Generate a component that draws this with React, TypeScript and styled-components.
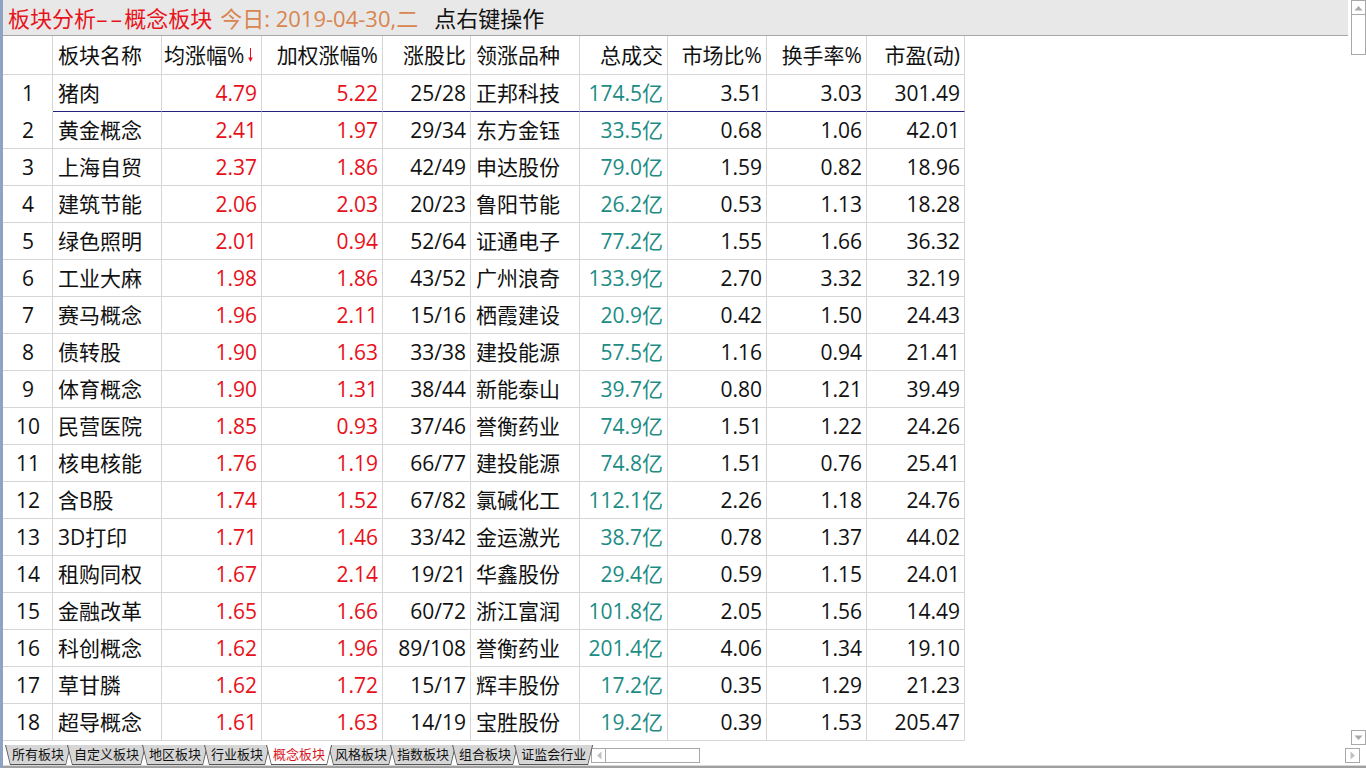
import React from 'react'
import styled, { createGlobalStyle } from 'styled-components'

const GlobalStyle = createGlobalStyle`
  html, body {
    margin: 0;
    padding: 0;
    background: #fff;
  }
  body {
    font-family: "Open Sans", "Noto Sans CJK SC", sans-serif;
  }
`

interface RowData {
  name: string
  avg: string
  weighted: string
  ratio: string
  leader: string
  volume: string
  market: string
  turnover: string
  pe: string
}

const rows: RowData[] = [
  { name: '猪肉', avg: '4.79', weighted: '5.22', ratio: '25/28', leader: '正邦科技', volume: '174.5亿', market: '3.51', turnover: '3.03', pe: '301.49' },
  { name: '黄金概念', avg: '2.41', weighted: '1.97', ratio: '29/34', leader: '东方金钰', volume: '33.5亿', market: '0.68', turnover: '1.06', pe: '42.01' },
  { name: '上海自贸', avg: '2.37', weighted: '1.86', ratio: '42/49', leader: '申达股份', volume: '79.0亿', market: '1.59', turnover: '0.82', pe: '18.96' },
  { name: '建筑节能', avg: '2.06', weighted: '2.03', ratio: '20/23', leader: '鲁阳节能', volume: '26.2亿', market: '0.53', turnover: '1.13', pe: '18.28' },
  { name: '绿色照明', avg: '2.01', weighted: '0.94', ratio: '52/64', leader: '证通电子', volume: '77.2亿', market: '1.55', turnover: '1.66', pe: '36.32' },
  { name: '工业大麻', avg: '1.98', weighted: '1.86', ratio: '43/52', leader: '广州浪奇', volume: '133.9亿', market: '2.70', turnover: '3.32', pe: '32.19' },
  { name: '赛马概念', avg: '1.96', weighted: '2.11', ratio: '15/16', leader: '栖霞建设', volume: '20.9亿', market: '0.42', turnover: '1.50', pe: '24.43' },
  { name: '债转股', avg: '1.90', weighted: '1.63', ratio: '33/38', leader: '建投能源', volume: '57.5亿', market: '1.16', turnover: '0.94', pe: '21.41' },
  { name: '体育概念', avg: '1.90', weighted: '1.31', ratio: '38/44', leader: '新能泰山', volume: '39.7亿', market: '0.80', turnover: '1.21', pe: '39.49' },
  { name: '民营医院', avg: '1.85', weighted: '0.93', ratio: '37/46', leader: '誉衡药业', volume: '74.9亿', market: '1.51', turnover: '1.22', pe: '24.26' },
  { name: '核电核能', avg: '1.76', weighted: '1.19', ratio: '66/77', leader: '建投能源', volume: '74.8亿', market: '1.51', turnover: '0.76', pe: '25.41' },
  { name: '含B股', avg: '1.74', weighted: '1.52', ratio: '67/82', leader: '氯碱化工', volume: '112.1亿', market: '2.26', turnover: '1.18', pe: '24.76' },
  { name: '3D打印', avg: '1.71', weighted: '1.46', ratio: '33/42', leader: '金运激光', volume: '38.7亿', market: '0.78', turnover: '1.37', pe: '44.02' },
  { name: '租购同权', avg: '1.67', weighted: '2.14', ratio: '19/21', leader: '华鑫股份', volume: '29.4亿', market: '0.59', turnover: '1.15', pe: '24.01' },
  { name: '金融改革', avg: '1.65', weighted: '1.66', ratio: '60/72', leader: '浙江富润', volume: '101.8亿', market: '2.05', turnover: '1.56', pe: '14.49' },
  { name: '科创概念', avg: '1.62', weighted: '1.96', ratio: '89/108', leader: '誉衡药业', volume: '201.4亿', market: '4.06', turnover: '1.34', pe: '19.10' },
  { name: '草甘膦', avg: '1.62', weighted: '1.72', ratio: '15/17', leader: '辉丰股份', volume: '17.2亿', market: '0.35', turnover: '1.29', pe: '21.23' },
  { name: '超导概念', avg: '1.61', weighted: '1.63', ratio: '14/19', leader: '宝胜股份', volume: '19.2亿', market: '0.39', turnover: '1.53', pe: '205.47' },
]

const tabs = ['所有板块', '自定义板块', '地区板块', '行业板块', '概念板块', '风格板块', '指数板块', '组合板块', '证监会行业']

const App = () => {
  return (
    <>
      <GlobalStyle />
      <Window>
        <Main>
          <Content>
            <TitleBar>
              <TitleRed>
                板块分析<Dashes>--</Dashes>概念板块
              </TitleRed>
              <TitleDate>今日: 2019-04-30,二</TitleDate>
              <TitleHint>点右键操作</TitleHint>
            </TitleBar>
            <Grid>
              <HeadRow>
                <Cell align="center" />
                <Cell align="left">板块名称</Cell>
                <Cell align="left" tight>
                  均涨幅%
                  <SortArrow width="7" height="16" viewBox="0 0 7 16">
                    <path d="M3.5 1 V13" stroke="#e8101a" strokeWidth="1" />
                    <path d="M1.2 10.5 L3.5 15 L5.8 10.5 Z" fill="#e8101a" />
                  </SortArrow>
                </Cell>
                <Cell>加权涨幅%</Cell>
                <Cell>涨股比</Cell>
                <Cell align="left">领涨品种</Cell>
                <Cell>总成交</Cell>
                <Cell>市场比%</Cell>
                <Cell>换手率%</Cell>
                <Cell>市盈(动)</Cell>
              </HeadRow>
              {rows.map((r, i) => {
                const sel = i === 0
                return (
                  <DataRow key={i}>
                    <Cell align="center" noBottom={sel}>{i + 1}</Cell>
                    <Cell align="left" selected={sel}>{r.name}</Cell>
                    <Cell selected={sel} tone="red">{r.avg}</Cell>
                    <Cell selected={sel} tone="red">{r.weighted}</Cell>
                    <Cell selected={sel}>{r.ratio}</Cell>
                    <Cell align="left" selected={sel}>{r.leader}</Cell>
                    <Cell selected={sel} tone="teal">{r.volume}</Cell>
                    <Cell selected={sel}>{r.market}</Cell>
                    <Cell selected={sel}>{r.turnover}</Cell>
                    <Cell selected={sel}>{r.pe}</Cell>
                  </DataRow>
                )
              })}
            </Grid>
          </Content>
          <VScroll>
            <ScrollBtn>
              <svg width="9" height="6" viewBox="0 0 9 6"><path d="M0.5 5.5 L4.5 1 L8.5 5.5 Z" fill="#a8a8a8" /></svg>
            </ScrollBtn>
            <VThumb />
            <VTrack />
            <ScrollBtn>
              <svg width="9" height="6" viewBox="0 0 9 6"><path d="M0.5 0.5 L4.5 5 L8.5 0.5 Z" fill="#a8a8a8" /></svg>
            </ScrollBtn>
          </VScroll>
        </Main>
        <TabBar>
          <Tabs>
            {tabs.map((t) => (
              <Tab key={t} active={t === '概念板块'}>
                <TabFace active={t === '概念板块'}>{t}</TabFace>
              </Tab>
            ))}
          </Tabs>
          <HScroll>
            <ScrollBtn>
              <svg width="6" height="9" viewBox="0 0 6 9"><path d="M5.5 0.5 L1 4.5 L5.5 8.5 Z" fill="#c0c0c0" /></svg>
            </ScrollBtn>
            <HThumb />
            <HTrack />
            <ScrollBtn>
              <svg width="6" height="9" viewBox="0 0 6 9"><path d="M0.5 0.5 L5 4.5 L0.5 8.5 Z" fill="#c0c0c0" /></svg>
            </ScrollBtn>
          </HScroll>
        </TabBar>
        <BottomStrip />
      </Window>
    </>
  )
}

const Window = styled.div`
  width: 1366px;
  height: 768px;
  box-sizing: border-box;
  border-left: 3px solid #8ea2c2;
  display: flex;
  flex-direction: column;
  overflow: hidden;
  background: #fff;
`

const Main = styled.div`
  display: flex;
  height: 745px;
`

const Content = styled.div`
  width: 1347px;
  display: flex;
  flex-direction: column;
`

const TitleBar = styled.div`
  height: 35px;
  border-bottom: 1px solid #a6a6a6;
  background: #e8e8e8;
  display: flex;
  align-items: center;
  gap: 8px;
  padding-left: 5px;
  font-size: 22px;
  line-height: 1;
  white-space: nowrap;
`

const TitleRed = styled.span`
  color: #e8141c;
`

const Dashes = styled.span`
  display: inline-block;
  letter-spacing: 1px;
  margin: 0 4px 0 4px;
  transform: scaleX(1.8);
  padding: 0 2px;
`

const TitleDate = styled.span`
  color: #d8854f;
`

const TitleHint = styled.span`
  color: #111;
  margin-left: 8px;
`

const Grid = styled.div`
  display: flex;
  flex-direction: column;
`

const columns = '50px 109px 100px 121px 88px 109px 88px 99px 100px 98px'

const HeadRow = styled.div`
  display: grid;
  grid-template-columns: ${columns};
  height: 39px;
`

const DataRow = styled.div`
  display: grid;
  grid-template-columns: ${columns};
  height: 37px;
`

const Cell = styled.div<{
  align?: 'left' | 'right' | 'center'
  tone?: 'red' | 'teal'
  selected?: boolean
  noBottom?: boolean
  tight?: boolean
}>`
  box-sizing: border-box;
  display: flex;
  align-items: center;
  justify-content: ${(p) => (p.align === 'left' ? 'flex-start' : p.align === 'center' ? 'center' : 'flex-end')};
  padding: 1px 4px 0 ${(p) => (p.tight ? '2px' : '5px')};
  border-right: 1px solid #d6d6d6;
  border-bottom: 1px solid ${(p) => (p.selected ? '#23237e' : p.noBottom ? 'transparent' : '#d6d6d6')};
  font-size: 21px;
  line-height: 1;
  white-space: nowrap;
  color: ${(p) => (p.tone === 'red' ? '#e8101a' : p.tone === 'teal' ? '#1c8c84' : '#111')};
`

const SortArrow = styled.svg`
  margin-left: 3px;
  margin-top: -2px;
`

const VScroll = styled.div`
  width: 15px;
  margin-left: 3px;
  display: flex;
  flex-direction: column;
`

const ScrollBtn = styled.div`
  width: 15px;
  height: 15px;
  box-sizing: border-box;
  border: 1px solid #a8a8a8;
  display: flex;
  align-items: center;
  justify-content: center;
  background: #fff;
`

const VThumb = styled.div`
  height: 40px;
  box-sizing: border-box;
  border: 1px solid #a8a8a8;
  border-top: none;
`

const VTrack = styled.div`
  flex: 1;
`

const TabBar = styled.div`
  height: 20px;
  display: flex;
  align-items: stretch;
  padding-left: 2px;
`

const Tabs = styled.div`
  display: flex;
  padding-right: 2px;
`

const Tab = styled.div<{ active?: boolean }>`
  position: relative;
  z-index: ${(p) => (p.active ? 2 : 1)};
  margin-right: -4px;
  background: #555;
  clip-path: polygon(0 0, 100% 0, calc(100% - 5px) 100%, 5px 100%);
  padding: 0 0 1px 0;
`

const TabFace = styled.div<{ active?: boolean }>`
  height: 100%;
  box-sizing: border-box;
  padding: 0 7px 0 7px;
  display: flex;
  align-items: center;
  font-size: 13px;
  line-height: 1;
  color: ${(p) => (p.active ? '#d8141c' : '#111')};
  background: ${(p) => (p.active ? '#fff' : '#d6d6d6')};
  clip-path: polygon(1px 0, calc(100% - 1px) 0, calc(100% - 5.5px) 100%, 5.5px 100%);
  white-space: nowrap;
`

const HScroll = styled.div`
  flex: 1;
  display: flex;
  align-items: center;
  padding-right: 6px;
`

const HThumb = styled.div`
  width: 94px;
  height: 15px;
  box-sizing: border-box;
  border: 1px solid #a8a8a8;
  border-left: none;
`

const HTrack = styled.div`
  flex: 1;
`

const BottomStrip = styled.div`
  flex: 1;
  border-top: 1px solid #d8d8d8;
  background: #a0a0a0;
`

export default App
